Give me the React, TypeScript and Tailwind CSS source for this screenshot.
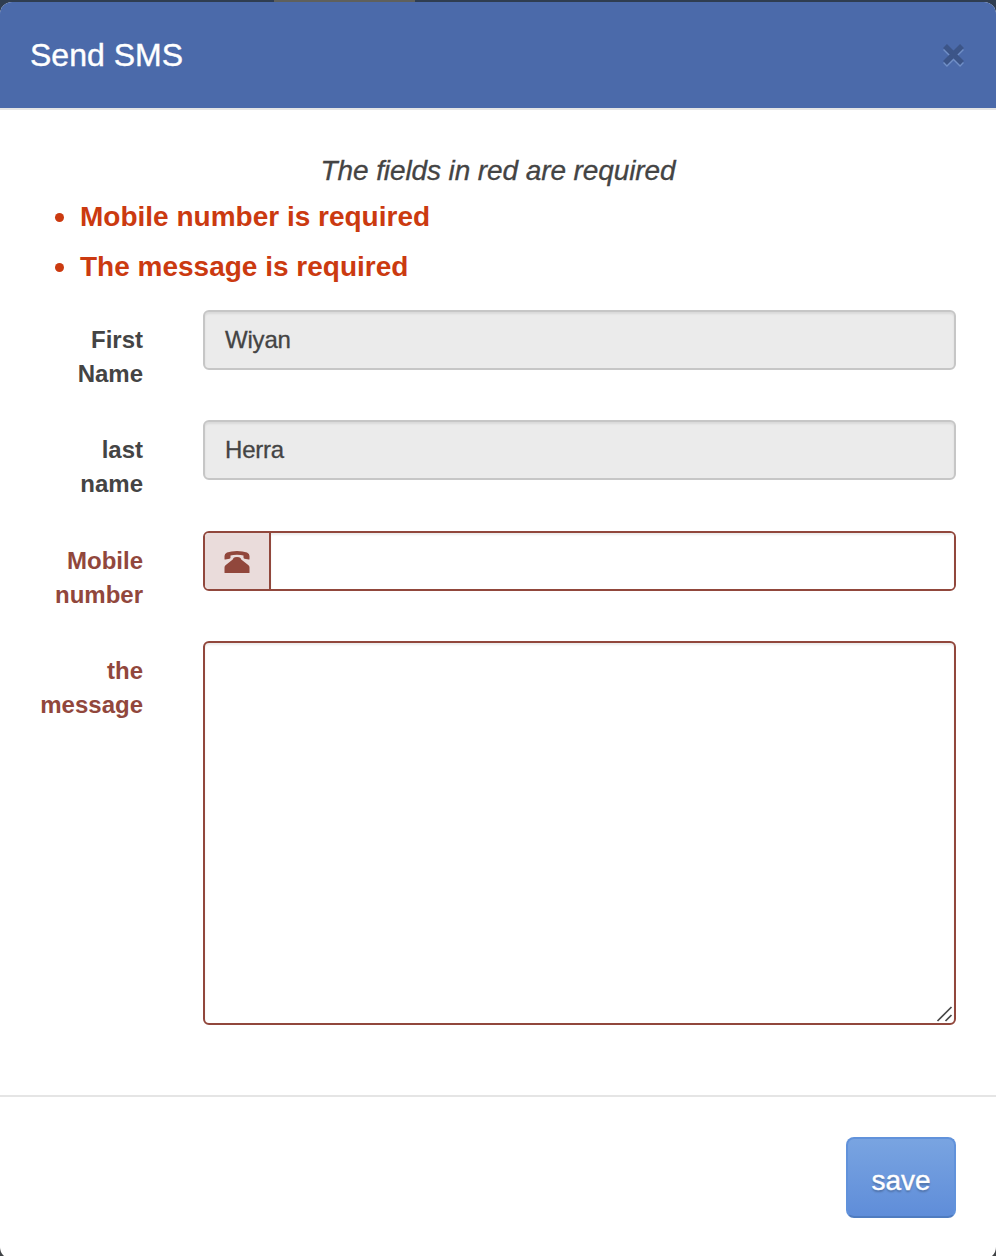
import React from "react";

function Label({ lines, error }: { lines: string[]; error?: boolean }) {
  return (
    <div
      className={`w-[143px] shrink-0 pt-[13px] text-right text-[24px] leading-[34.3px] font-bold ${
        error ? "text-[#91473c]" : "text-[#444444]"
      }`}
    >
      {lines.map((l) => (
        <div key={l}>{l}</div>
      ))}
    </div>
  );
}

function Disabled({ value }: { value: string }) {
  return (
    <div className="flex h-[60px] w-[753px] items-center rounded-[6px] border-2 border-[#c6c6c6] bg-[#ebebeb] px-5 text-[24px] tracking-[-0.2px] text-[#444444] shadow-[inset_0_2px_2px_rgba(0,0,0,0.075)] [-webkit-text-stroke:0.3px_#444444]">
      {value}
    </div>
  );
}

export default function App() {
  return (
    <div className="relative h-[1256px] w-[996px] overflow-hidden bg-[#404346] pt-[2px] font-['Liberation_Sans',Arial,sans-serif]">
      <div className="absolute top-0 left-0 h-[14px] w-full bg-[#2f3d50]" />
      <div className="absolute top-0 left-[274px] h-[2px] w-[141px] bg-[#5f605c]" />
      <div className="relative flex h-[1257px] flex-col overflow-hidden rounded-[12px] bg-white">
        <header className="flex h-[108px] shrink-0 items-center justify-between border-b-2 border-[#e5e5e5] bg-[#4b6aaa] px-[30px]">
          <h4 className="text-[32px] leading-[46px] text-white [-webkit-text-stroke:0.4px_white]">Send SMS</h4>
          <svg width="26" height="26" viewBox="0 0 26 26" aria-label="Close">
            <path d="M5 6 22 23M22 6 5 23" stroke="#708fc7" strokeWidth="5.5" />
            <path d="M5 4 22 21M22 4 5 21" stroke="#3c5588" strokeWidth="5.5" />
          </svg>
        </header>
        <main className="h-[985px] shrink-0">
          <p className="pt-[41px] text-center text-[28px] leading-[40px] tracking-[-0.1px] text-[#444444] italic [-webkit-text-stroke:0.3px_#444444]">
            The fields in red are required
          </p>
          <ul className="pt-px text-[28px] leading-[50px] font-bold text-[#cb3a10]">
            {["Mobile number is required", "The message is required"].map((t) => (
              <li key={t} className="flex items-center">
                <span className="mr-[16px] ml-[55px] size-[9px] rounded-full bg-[#cb3a10]" />
                {t}
              </li>
            ))}
          </ul>
          <div className="flex h-[118px] gap-[60px] pt-[18px]">
            <Label lines={["First", "Name"]} />
            <Disabled value="Wiyan" />
          </div>
          <div className="flex h-[111px] gap-[60px] pt-[10px]">
            <Label lines={["last", "name"]} />
            <Disabled value="Herra" />
          </div>
          <div className="flex h-[110px] gap-[60px] pt-[10px]">
            <Label lines={["Mobile", "number"]} error />
            <div className="flex h-[60px] w-[753px] overflow-hidden rounded-[6px] border-2 border-[#91473c]">
              <div className="flex w-[66px] items-center justify-center border-r-2 border-[#91473c] bg-[#eadcdb] pt-[2px]">
                <svg width="26" height="24" viewBox="0 0 26 24" fill="#91473c">
                  <path d="M.5 9V6Q.5 3.500 3 2.500 7 1 13 1T23 2.500Q25.500 3.500 25.500 6V9Q25.500 9.700 24.700 9.500L20.500 8.700Q19.500 8.500 19.500 7.500V5.500Q17 4.800 13 4.800T6.500 5.500V7.500Q6.500 8.500 5.500 8.700L1.300 9.500Q.5 9.700 .5 9Z" />
                  <path d="M9.500 8Q10.500 7 13 7T16.500 8Q17 9.500 18.500 10.500L24.500 15.200Q25.500 16 25.500 17.500V22.500Q25.500 23 25 23H1Q.5 23 .5 22.500V17.500Q.5 16 1.500 15.200L7.500 10.500Q9 9.500 9.500 8Z" />
                </svg>
              </div>
              <div className="flex-1 bg-white shadow-[inset_0_2px_2px_rgba(0,0,0,0.075)]" />
            </div>
          </div>
          <div className="flex gap-[60px] pt-[10px]">
            <Label lines={["the", "message"]} error />
            <div className="flex h-[384px] w-[753px] items-end justify-end rounded-[6px] border-2 border-[#91473c] shadow-[inset_0_2px_2px_rgba(0,0,0,0.075)]">
              <svg width="18" height="18" viewBox="0 0 18 18" stroke="#484848" strokeWidth="1.7">
                <path d="M1.500 16 15.500 2M9.500 16 15.500 10" />
              </svg>
            </div>
          </div>
        </main>
        <footer className="flex flex-1 items-start justify-end border-t-2 border-[#e5e5e5] pt-[40px] pr-[40px]">
          <button className="h-[81px] w-[110px] rounded-[8px] border-2 border-[#6192db] border-b-[#4f7cc0] bg-linear-to-b from-[#79a4e1] to-[#5f8dd9] pt-[6px] text-[28px] text-white [-webkit-text-stroke:0.4px_white] [text-shadow:0_2px_2px_rgba(0,0,0,0.25)]">
            save
          </button>
        </footer>
      </div>
    </div>
  );
}
